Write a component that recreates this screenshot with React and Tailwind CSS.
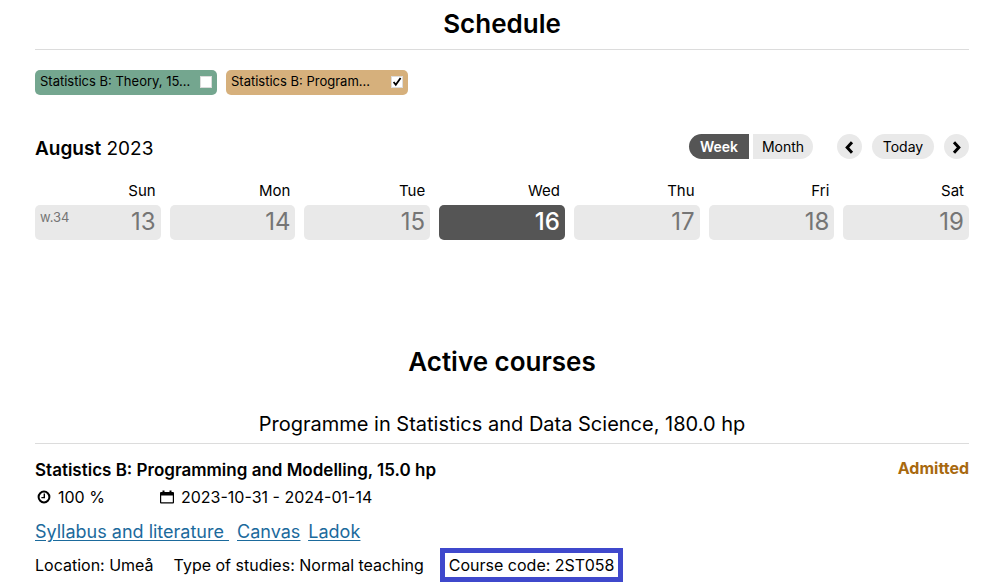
import React, { useState } from 'react';

const days = [
  { name: 'Sun', date: 13, week: 'w.34' },
  { name: 'Mon', date: 14 },
  { name: 'Tue', date: 15 },
  { name: 'Wed', date: 16 },
  { name: 'Thu', date: 17 },
  { name: 'Fri', date: 18 },
  { name: 'Sat', date: 19 },
];

const today = 16;

const courses = [
  { id: 'theory', label: 'Statistics B: Theory, 15...', colorClass: 'bg-[#74a68f]' },
  { id: 'programming', label: 'Statistics B: Program...', colorClass: 'bg-[#d6b07c]' },
];

const CourseFilter = ({ course, checked, onChange }) => (
  <label
    htmlFor={course.id}
    className={`flex h-[25px] w-[182px] items-center justify-between rounded-[5px] px-[5px] pb-px text-[13px] ${course.colorClass}`}
  >
    <span className="whitespace-nowrap">{course.label}</span>
    <span className="relative size-3 shrink-0">
      <input
        id={course.id}
        type="checkbox"
        checked={checked}
        onChange={onChange}
        className="block size-3 appearance-none border border-[#dcdcdc] bg-white"
      />
      {checked && (
        <svg viewBox="0 0 12 12" fill="none" className="pointer-events-none absolute inset-0 size-3">
          <path d="M2.6 6 4.8 8.8 9.6 2" stroke="#000" strokeWidth="1.8" />
        </svg>
      )}
    </span>
  </label>
);

const Chevron = ({ d }) => (
  <svg viewBox="0 0 25 25" fill="none" className="size-[25px]">
    <path d={d} stroke="#000" strokeWidth="3" />
  </svg>
);

const ClockIcon = () => (
  <svg viewBox="0 0 14 14" fill="none" className="size-[14px]">
    <circle cx="7" cy="7" r="5.4" stroke="#000" strokeWidth="2" />
    <path d="M7.3 3.6V7.6H4.4" stroke="#000" strokeWidth="1.4" />
  </svg>
);

const CalendarIcon = () => (
  <svg viewBox="0 0 14 14" className="size-[14px]">
    <path
      fill="#000"
      fillRule="evenodd"
      d="M2.5 0.5h2v1.5h5V0.5h2V2H13a1 1 0 0 1 1 1v9.5a1 1 0 0 1-1 1H1a1 1 0 0 1-1-1V3a1 1 0 0 1 1-1h1.5zM1.2 5.6v6.7h11.6v-6.7z"
    />
  </svg>
);

const App = () => {
  const [selected, setSelected] = useState({ theory: false, programming: true });
  const [view, setView] = useState('Week');

  const toggleCourse = (id) => setSelected({ ...selected, [id]: !selected[id] });

  const viewClass = (name) =>
    view === name ? 'bg-[#555555] font-semibold text-white' : 'bg-[#e9e9e9]';

  return (
    <main className="bg-white pr-[31px] pl-[35px] font-['Inter','Noto_Sans',sans-serif] text-base text-black">
      <section>
        <h1 className="border-b border-[#dcdcdc] pt-2 pb-[9px] text-center text-[26px] leading-8 font-semibold">
          Schedule
        </h1>
        <div className="mt-5 flex gap-[9px]">
          {courses.map((course) => (
            <CourseFilter
              key={course.id}
              course={course}
              checked={selected[course.id]}
              onChange={() => toggleCourse(course.id)}
            />
          ))}
        </div>

        <div className="mt-[39px] flex items-start justify-between">
          <h2 className="pt-[3px] text-[19px] leading-6">
            <strong className="font-semibold">August</strong> 2023
          </h2>
          <div className="flex text-[14px]">
            <div className="mr-6 flex gap-1">
              <button
                className={`h-[25px] w-[60px] rounded-l-full ${viewClass('Week')}`}
                onClick={() => setView('Week')}
              >
                Week
              </button>
              <button
                className={`h-[25px] w-[60px] rounded-r-full ${viewClass('Month')}`}
                onClick={() => setView('Month')}
              >
                Month
              </button>
            </div>
            <div className="flex items-center gap-[10px]">
              <button className="size-[25px] rounded-full bg-[#e9e9e9]" aria-label="Previous week">
                <Chevron d="M15 8.3 10.2 13.5l4.8 5.2" />
              </button>
              <button className="h-[25px] w-[62px] rounded-full bg-[#e9e9e9]">Today</button>
              <button className="size-[25px] rounded-full bg-[#e9e9e9]" aria-label="Next week">
                <Chevron d="M10 8.3l4.8 5.2-4.8 5.2" />
              </button>
            </div>
          </div>
        </div>

        <div className="mt-[18px] grid grid-cols-7 gap-[9px]">
          {days.map((day) => (
            <div key={day.name}>
              <div className="pr-[5px] pb-[2px] text-right text-[15px] leading-6">{day.name}</div>
              <div
                className={`flex h-[35px] justify-between rounded-[5px] px-[5px] ${
                  day.date === today ? 'bg-[#555555] font-medium text-white' : 'bg-[#e9e9e9] text-[#757575]'
                }`}
              >
                <span className="text-[13px] leading-6">{day.week}</span>
                <span className="text-2xl leading-[34px]">{day.date}</span>
              </div>
            </div>
          ))}
        </div>
      </section>

      <section className="mt-[106px]">
        <h1 className="text-center text-[26px] leading-8 font-semibold">Active courses</h1>
        <h2 className="mt-[34px] border-b border-[#dcdcdc] pb-[7px] text-center text-[20px] leading-6">
          Programme in Statistics and Data Science, 180.0 hp
        </h2>
        <div className="mt-[14px] flex items-start justify-between leading-6">
          <h3 className="text-[17px] font-semibold">Statistics B: Programming and Modelling, 15.0 hp</h3>
          <span className="leading-5 font-bold text-[#a8690f]">Admitted</span>
        </div>
        <div className="mt-[3px] flex leading-6">
          <div className="flex w-[125px] items-center gap-[7px] pl-[2px]">
            <ClockIcon />
            100 %
          </div>
          <div className="flex items-center gap-[7px]">
            <CalendarIcon />
            2023-10-31 - 2024-01-14
          </div>
        </div>
        <div className="mt-[11px] flex gap-2 text-lg leading-6 text-[#1b6a9c] underline underline-offset-2">
          <a href="#syllabus">Syllabus and literature&nbsp;</a>
          <a href="#canvas">Canvas</a>
          <a href="#ladok">Ladok</a>
        </div>
        <div className="mt-1 flex items-center leading-6">
          <span className="mr-5">Location: Umeå</span>
          <span className="mr-4">Type of studies: Normal teaching</span>
          <span className="border-[5px] border-[#3f48cc] px-1">Course code: 2ST058</span>
        </div>
      </section>
    </main>
  );
};
export default App;
